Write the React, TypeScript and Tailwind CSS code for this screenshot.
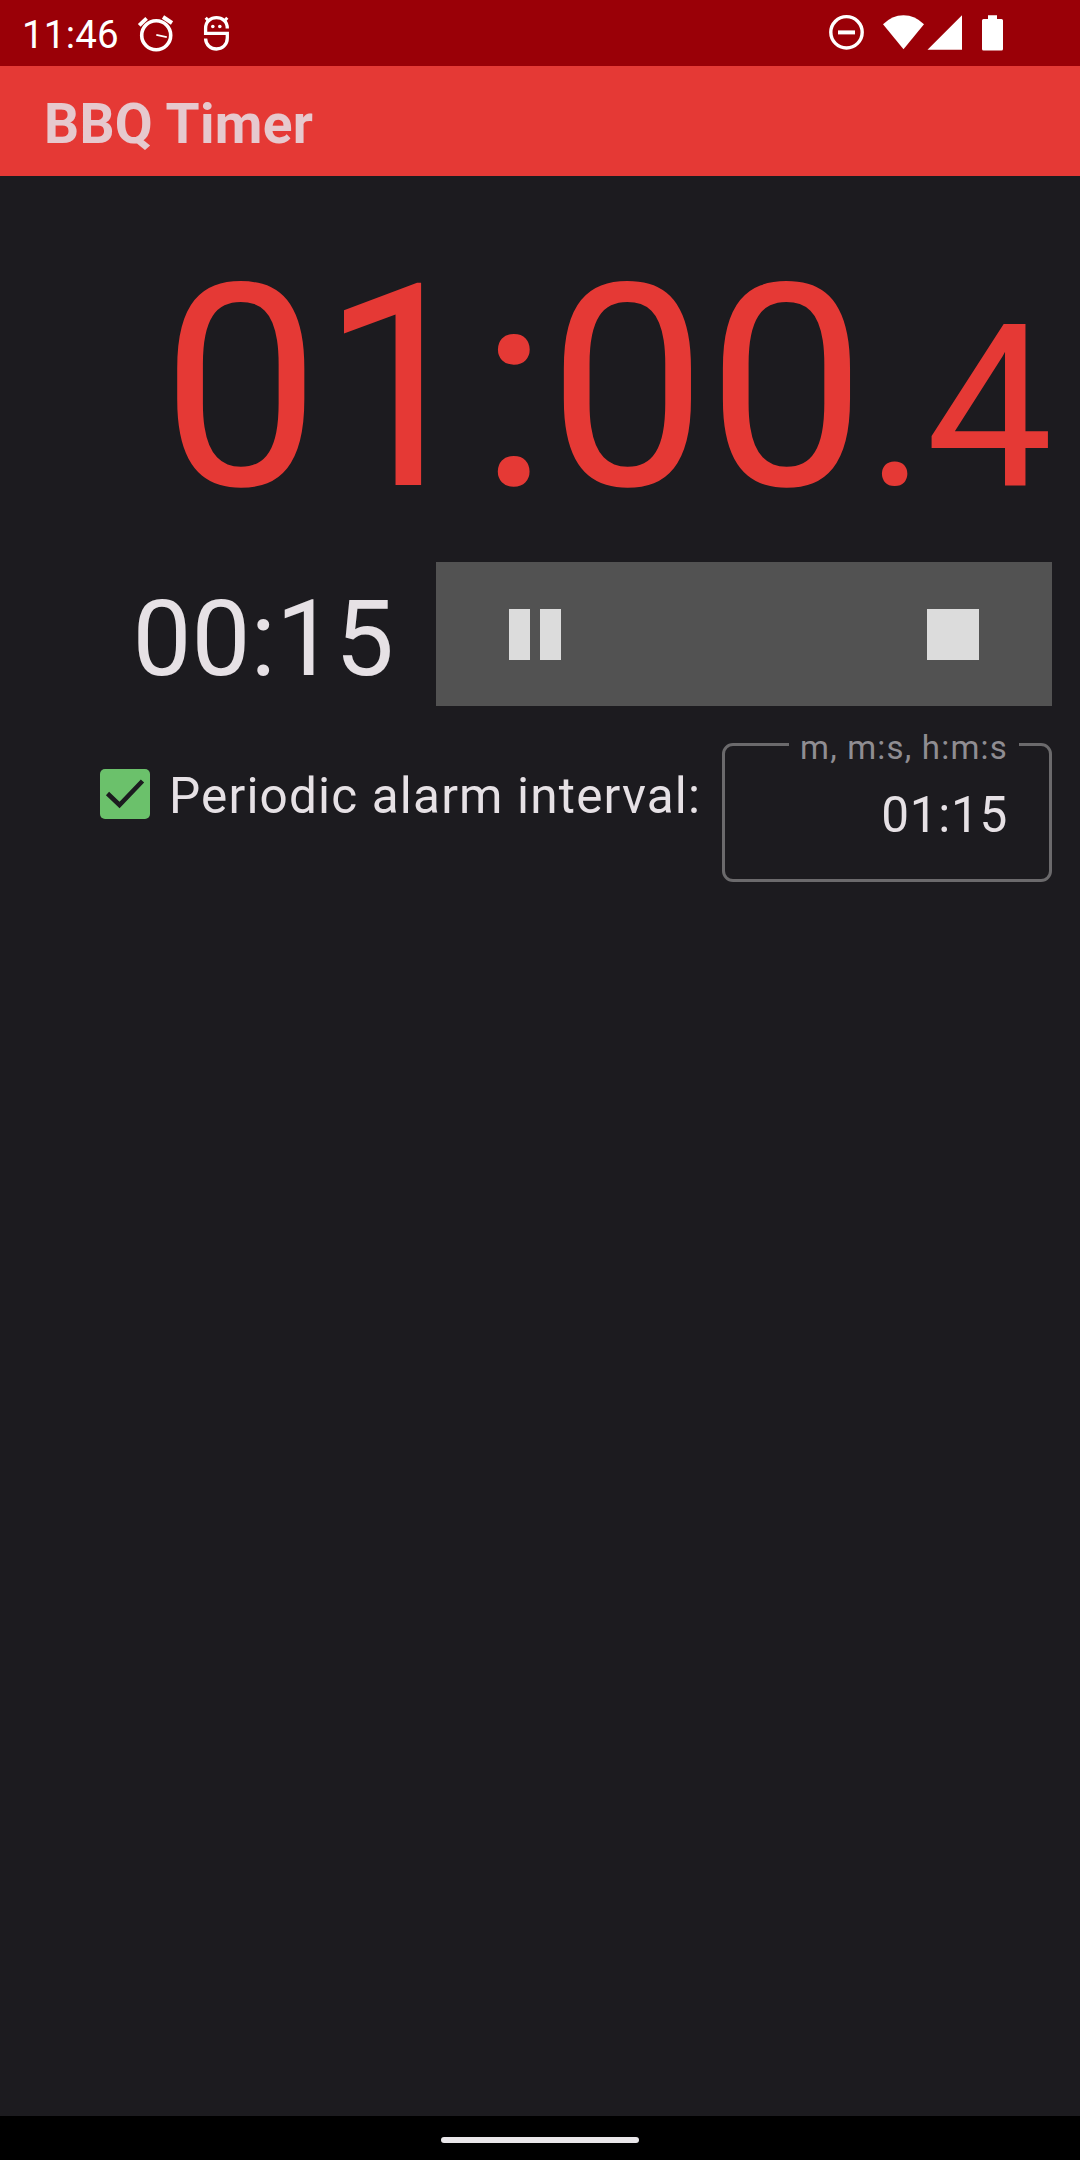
function StatusBar() {
  return (
    <div className="flex h-[66px] items-start justify-between bg-[#9a0007] pl-[22px] text-white">
      <div className="flex items-start">
        <span className="mt-[2px] w-[100px] text-[38.5px] leading-[66px] tracking-[0.2px]">11:46</span>
        <svg className="ml-[12px] mt-[12px] h-[42px] w-[44px]" viewBox="134 12 44 42" fill="none" stroke="currentColor">
          <circle cx="156.2" cy="35.2" r="14.5" strokeWidth="3.6" />
          <path d="M139.2 25.4 146.6 18.4" strokeWidth="3.8" />
          <path d="M163 17 172 23" strokeWidth="4" />
          <path d="M156.3 34.8 166.8 37.2" strokeWidth="1.7" />
        </svg>
        <svg className="ml-[20px] mt-[12px] h-[42px] w-[38px]" viewBox="198 12 38 42" fill="none" stroke="currentColor">
          <path d="M227.3 28.500C227.300 21 222 17.700 216.500 17.700S205.600 21 205.600 28.500V33.300H227.300V38C227.300 45 222 49 216.500 49S205.600 45 205.600 38.500" strokeWidth="3.3" />
          <path d="M205.700 17.800 209.500 22M227.300 17.800 223.500 22" strokeWidth="3" />
          <circle cx="212.800" cy="26.500" r="1.800" fill="currentColor" stroke="none" />
          <circle cx="219.800" cy="26.500" r="1.800" fill="currentColor" stroke="none" />
        </svg>
      </div>
      <svg className="mr-[74px] h-[66px] w-[180px]" viewBox="826 0 180 66" fill="currentColor">
        <circle cx="846.5" cy="32.3" r="15.7" fill="none" stroke="currentColor" strokeWidth="3.4" />
        <rect x="838" y="30.4" width="17" height="4" />
        <path d="M883 24.300Q892 15.200 903.500 15.200T924 24.300L903.500 49.300Z" />
        <path d="M962 15.200V49.700H927.500Z" />
        <path d="M988 15.200H997V19H1001.500Q1003 19 1003 20.500V49Q1003 50.600 1001.500 50.600H983.500Q982 50.600 982 49V20.500Q982 19 983.500 19H988Z" />
      </svg>
    </div>
  );
}

export default function App() {
  return (
    <div className="flex h-[2160px] w-[1080px] flex-col overflow-hidden bg-[#1c1b1f] font-[Roboto,sans-serif] text-[#e6e1e5]">
      <StatusBar />
      <header className="flex h-[110px] items-center bg-[#e53935] pl-[44px] pt-[6px]">
        <h1 className="text-[55px] font-bold leading-none tracking-[0.3px] text-[#e6c9ce]">BBQ Timer</h1>
      </header>

      <main className="flex flex-1 flex-col pr-[28px]">
        <div className="-mr-px mt-[72px] flex h-[280px] items-baseline justify-end whitespace-nowrap leading-[280px] text-[#e53935]">
          <span className="text-[283px]">01:00</span>
          <span className="text-[226.4px]">.4</span>
        </div>

        <div className="mt-[34px] flex h-[144px] items-center justify-end">
          <span className="mr-[42px] mt-[12px] text-[105px] leading-[120px]">00:15</span>
          <div className="flex h-full w-[616px] items-center justify-between bg-[#525252] px-[73px]">
            <button className="flex h-[51px] w-[52px] justify-between" aria-label="Pause">
              <span className="h-full w-[21px] bg-[#dcdcdc]" />
              <span className="h-full w-[21px] bg-[#dcdcdc]" />
            </button>
            <button className="h-[51px] w-[52px] bg-[#dcdcdc]" aria-label="Stop" />
          </div>
        </div>

        <div className="mt-[37px] flex h-[139px] justify-end">
          <label className="flex h-[102px] items-center">
            <svg className="h-[50px] w-[50px]" viewBox="0 0 50 50">
              <rect width="50" height="50" rx="5" fill="#6bc16b" />
              <path d="M7.500 24.500 19.500 36 42.500 12" fill="none" stroke="#1c1b1f" strokeWidth="4.600" />
            </svg>
            <span className="ml-[19px] mt-[4px] w-[553px] whitespace-nowrap text-[49.5px] leading-[60px] tracking-[1.16px]">
              Periodic alarm interval:
            </span>
          </label>
          <fieldset className="relative h-[139px] w-[330px] rounded-[11px] border-[3px] border-[#6b6a6c]">
            <span className="absolute right-[30px] top-[-22px] w-[230px] whitespace-nowrap bg-[#1c1b1f] pl-[11px] text-[33px] leading-[48px] tracking-[1.2px] text-[#8f8d92]">
              m, m:s, h:m:s
            </span>
            <div className="mr-[41px] mt-[39px] text-right text-[49.5px] leading-[60px] tracking-[0.7px]">01:15</div>
          </fieldset>
        </div>
      </main>

      <footer className="flex h-[44px] justify-center bg-black pt-[21px]">
        <div className="h-[6px] w-[198px] rounded-full bg-[#e9e7ea]" />
      </footer>
    </div>
  );
}
